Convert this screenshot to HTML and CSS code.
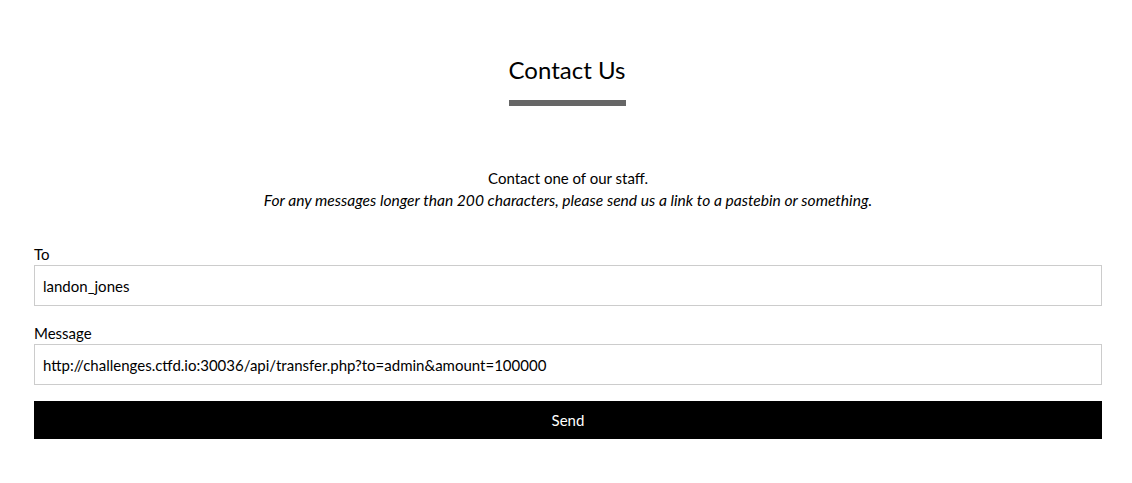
FILE: index.html
```html
<!DOCTYPE html>
<html>
<head>
<meta charset="utf-8">
<link rel="stylesheet" href="styles.css">
</head>
<body>
<div class="page">
  <div class="header">
    <h1 class="title">Contact Us</h1>
    <div class="bar"></div>
  </div>
  <div class="intro">
    <p class="line">Contact one of our staff.</p>
    <p class="line italic">For any messages longer than 200 characters, please send us a link to a pastebin or something.</p>
  </div>
  <form class="form">
    <div class="field">
      <label class="label">To</label>
      <input class="input" type="text" value="landon_jones">
    </div>
    <div class="field field-last">
      <label class="label">Message</label>
      <input class="input" type="text" value="http://challenges.ctfd.io:30036/api/transfer.php?to=admin&amp;amount=100000">
    </div>
    <button class="send" type="button">Send</button>
  </form>
</div>
</body>
</html>
```
FILE: styles.css
```css
* { box-sizing: border-box; }
body {
  margin: 0;
  font-family: Lato, "Liberation Sans", sans-serif;
  color: #000;
  background: #fff;
}
.page {
  padding: 0 30px 0 34px;
}
.header {
  display: flex;
  flex-direction: column;
  align-items: center;
  padding-top: 55px;
  padding-right: 2px;
}
.title {
  margin: 0;
  font-size: 24px;
  font-weight: 400;
  line-height: 29px;
}
.bar {
  width: 117px;
  height: 6px;
  background: #666;
  margin-top: 16px;
}
.intro {
  margin-top: 61px;
  text-align: center;
  font-size: 15px;
}
.line {
  margin: 0;
  line-height: 22px;
}
.italic {
  font-style: italic;
  font-size: 15.6px;
}
.form {
  margin-top: 34px;
  display: flex;
  flex-direction: column;
}
.field {
  display: flex;
  flex-direction: column;
  margin-bottom: 18px;
}
.field-last { margin-bottom: 16px; }
.label {
  font-size: 15px;
  line-height: 18px;
  margin-bottom: 2px;
}
.input {
  height: 41px;
  border: 1px solid #ccc;
  border-radius: 0;
  padding: 0 8px;
  font-family: Lato, "Liberation Sans", sans-serif;
  font-size: 15px;
  color: #000;
  outline: none;
}
.send {
  height: 38px;
  border: none;
  background: #000;
  color: #fff;
  font-family: Lato, "Liberation Sans", sans-serif;
  font-size: 15px;
  padding: 0;
}
```
